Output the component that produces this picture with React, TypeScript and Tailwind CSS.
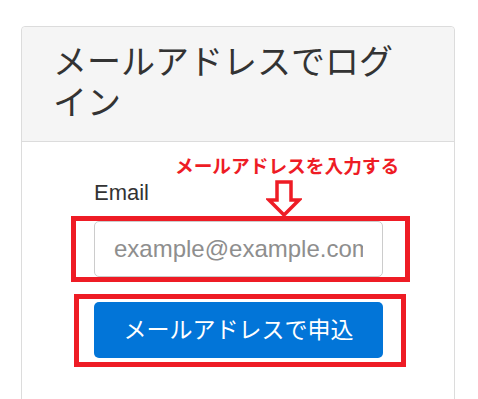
import React from "react"

const font = "font-['Liberation_Sans','Noto_Sans_CJK_JP',sans-serif]"

function DownArrow() {
  return (
    <svg
      className="absolute left-[244px] top-[38px]"
      width="36"
      height="38"
      viewBox="0 0 36 38"
    >
      <polygon
        points="11,2 25,2 25,20 33,20 18,35 3,20 11,20"
        fill="#ffffff"
        stroke="#ee1c25"
        strokeWidth="3.5"
      />
    </svg>
  )
}

export default function App() {
  return (
    <div className={`h-[399px] overflow-hidden bg-white ${font}`}>
      <div className="ml-[21px] mt-[26px] flex w-[434px] flex-col rounded-[4px] border border-[#dcdcdc]">
        {/* Header */}
        <div className="rounded-t-[4px] border-b border-[#dcdcdc] bg-[#f5f5f5] pl-[31px] pr-[28px] pt-[15px] pb-[17px]">
          <h1 className="text-[34px] leading-[41px] font-normal text-[#333333]">
            メールアドレスでログイン
          </h1>
        </div>

        {/* Body */}
        <div className="relative flex flex-col pl-[72px] pr-[71px] pt-[34px] pb-[80px]">
          {/* annotation */}
          <div className="absolute left-[153px] top-[16px] text-[18.7px] leading-none font-bold text-[#ee1c25] whitespace-nowrap">
            メールアドレスを入力する
          </div>
          <DownArrow />

          <label className="text-[22px] leading-[33px] text-[#333333]">Email</label>

          <div className="relative mt-[12px]">
            <input
              type="email"
              placeholder="example@example.com"
              className="block h-[56px] w-full rounded-[5px] border border-[#cccccc] px-[19px] text-[24px] text-[#333333] placeholder:text-[#8e8e8e] outline-none"
            />
            <div className="pointer-events-none absolute -left-[23px] -right-[27px] -top-[5px] -bottom-[5px] border-[5px] border-[#ee1c25]" />
          </div>

          <div className="relative mt-[25px]">
            <button className="block h-[56px] w-full rounded-[5px] bg-[#0275d8] text-[23px] text-white">
              メールアドレスで申込
            </button>
            <div className="pointer-events-none absolute -left-[20px] -right-[23px] -top-[8px] -bottom-[9px] border-[5px] border-[#ee1c25]" />
          </div>
        </div>
      </div>
    </div>
  )
}
